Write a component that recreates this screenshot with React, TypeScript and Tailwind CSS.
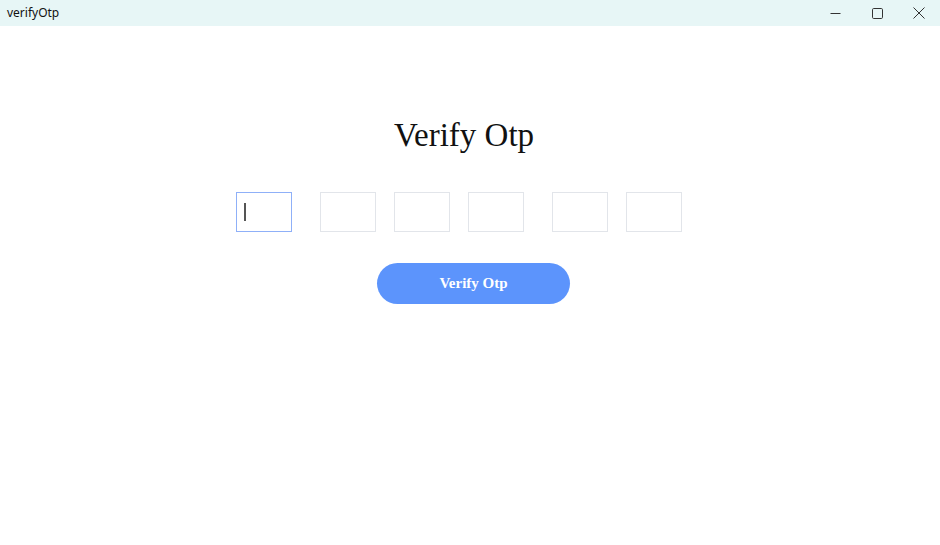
import React from "react";

function OtpBox({ active, className = "" }: { active?: boolean; className?: string }) {
  return (
    <div
      className={`w-[56px] h-[40px] bg-white flex items-center ${
        active ? "border-[1.5px] border-[#8fb0f8]" : "border-[1.5px] border-[#e2e5ea]"
      } ${className}`}
    >
      {active && <span className="ml-[7px] w-[1.5px] h-[18px] bg-[#555]" />}
    </div>
  );
}

export default function App() {
  return (
    <div className="w-[940px] h-[545px] bg-white flex flex-col overflow-hidden">
      <div className="h-[26px] bg-[#e7f6f6] flex items-center justify-between shrink-0">
        <span className="pl-[7px] text-[12px] text-[#111] font-['Noto_Sans',sans-serif]">verifyOtp</span>
        <div className="flex items-center h-full">
          <div className="w-[42px] h-full flex items-center justify-center">
            <svg width="11" height="11" viewBox="0 0 11 11">
              <path d="M0.5 5.5h10" stroke="#333" strokeWidth="1" />
            </svg>
          </div>
          <div className="w-[42px] h-full flex items-center justify-center">
            <svg width="11" height="11" viewBox="0 0 11 11">
              <rect x="0.5" y="0.5" width="10" height="10" rx="1.2" fill="none" stroke="#333" strokeWidth="1" />
            </svg>
          </div>
          <div className="w-[42px] h-full flex items-center justify-center">
            <svg width="12" height="12" viewBox="0 0 12 12">
              <path d="M0.5 0.5l11 11M11.5 0.5l-11 11" stroke="#333" strokeWidth="1" />
            </svg>
          </div>
        </div>
      </div>

      <div className="flex flex-col font-['Liberation_Serif',serif]">
        <h1 className="mt-[91px] pr-[12px] text-center text-[33px] leading-[37px] text-[#111]">Verify Otp</h1>
        <div className="mt-[38px] flex pl-[236px]">
          <OtpBox active />
          <OtpBox className="ml-[28px]" />
          <OtpBox className="ml-[18px]" />
          <OtpBox className="ml-[18px]" />
          <OtpBox className="ml-[28px]" />
          <OtpBox className="ml-[18px]" />
        </div>
        <div className="mt-[31px] flex pl-[377px]">
          <button className="w-[193px] h-[41px] rounded-full bg-[#5c94fc] text-white font-bold text-[15px]">
            Verify Otp
          </button>
        </div>
      </div>
    </div>
  );
}
